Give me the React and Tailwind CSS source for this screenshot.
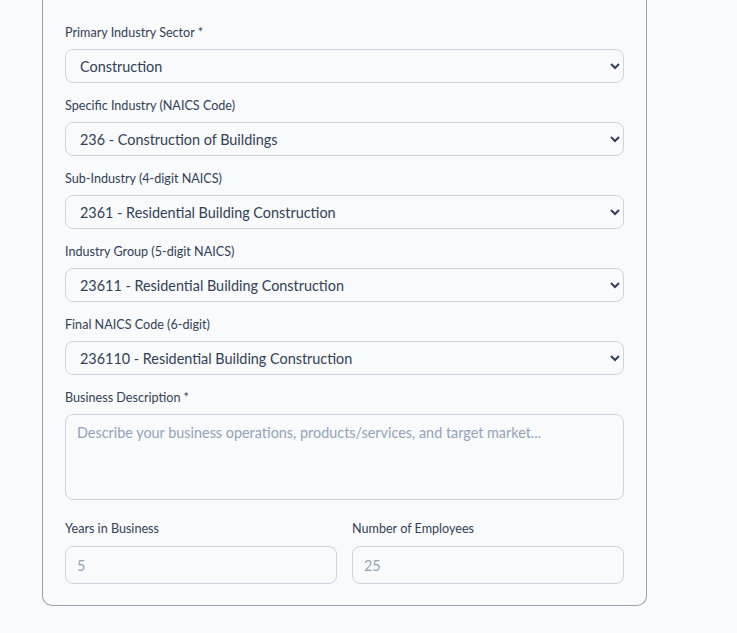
import React from "react";

const selects = [
  { label: "Primary Industry Sector", required: true, value: "Construction" },
  { label: "Specific Industry (NAICS Code)", value: "236 - Construction of Buildings" },
  { label: "Sub-Industry (4-digit NAICS)", value: "2361 - Residential Building Construction" },
  { label: "Industry Group (5-digit NAICS)", value: "23611 - Residential Building Construction" },
  { label: "Final NAICS Code (6-digit)", value: "236110 - Residential Building Construction" },
];

function Label({ children, required }) {
  return (
    <label className="block text-[12.6px] leading-[18px] text-[#334155] mb-[7px]">
      {children}
      {required && <span className="ml-[3px]">*</span>}
    </label>
  );
}

export default function App() {
  return (
    <div className="min-h-screen bg-[#f8fafc] font-['Lato',sans-serif] pl-[42px] pr-[90px]">
      <div className="w-[605px] border-x border-b border-[#94a3b8] rounded-b-[10px] px-[22px] pt-[24px] pb-[21px]">
        <div className="flex flex-col gap-[14px]">
          {selects.map((s) => (
            <div key={s.label}>
              <Label required={s.required}>{s.label}</Label>
              <select
                defaultValue={s.value}
                className="w-full h-[34px] rounded-[8px] border border-[#cbd5e1] bg-[#f8fafc] pl-[10px] pr-2 text-[14.4px] text-[#334155]"
              >
                <option>{s.value}</option>
              </select>
            </div>
          ))}
          <div>
            <Label required>Business Description</Label>
            <textarea
              rows={3}
              placeholder="Describe your business operations, products/services, and target market..."
              className="block w-full h-[86px] resize-none rounded-[8px] border border-[#cbd5e1] bg-[#f8fafc] px-[11px] py-[7px] text-[14.4px] text-[#334155] placeholder:text-[#94a3b8]"
            />
          </div>
          <div className="grid grid-cols-2 gap-[15px] mt-[6px]">
            <div>
              <Label>Years in Business</Label>
              <input
                placeholder="5"
                className="w-full h-[38px] mt-[1px] rounded-[8px] border border-[#cbd5e1] bg-[#f8fafc] px-[11px] text-[14.4px] placeholder:text-[#94a3b8]"
              />
            </div>
            <div>
              <Label>Number of Employees</Label>
              <input
                placeholder="25"
                className="w-full h-[38px] mt-[1px] rounded-[8px] border border-[#cbd5e1] bg-[#f8fafc] px-[11px] text-[14.4px] placeholder:text-[#94a3b8]"
              />
            </div>
          </div>
        </div>
      </div>
    </div>
  );
}
